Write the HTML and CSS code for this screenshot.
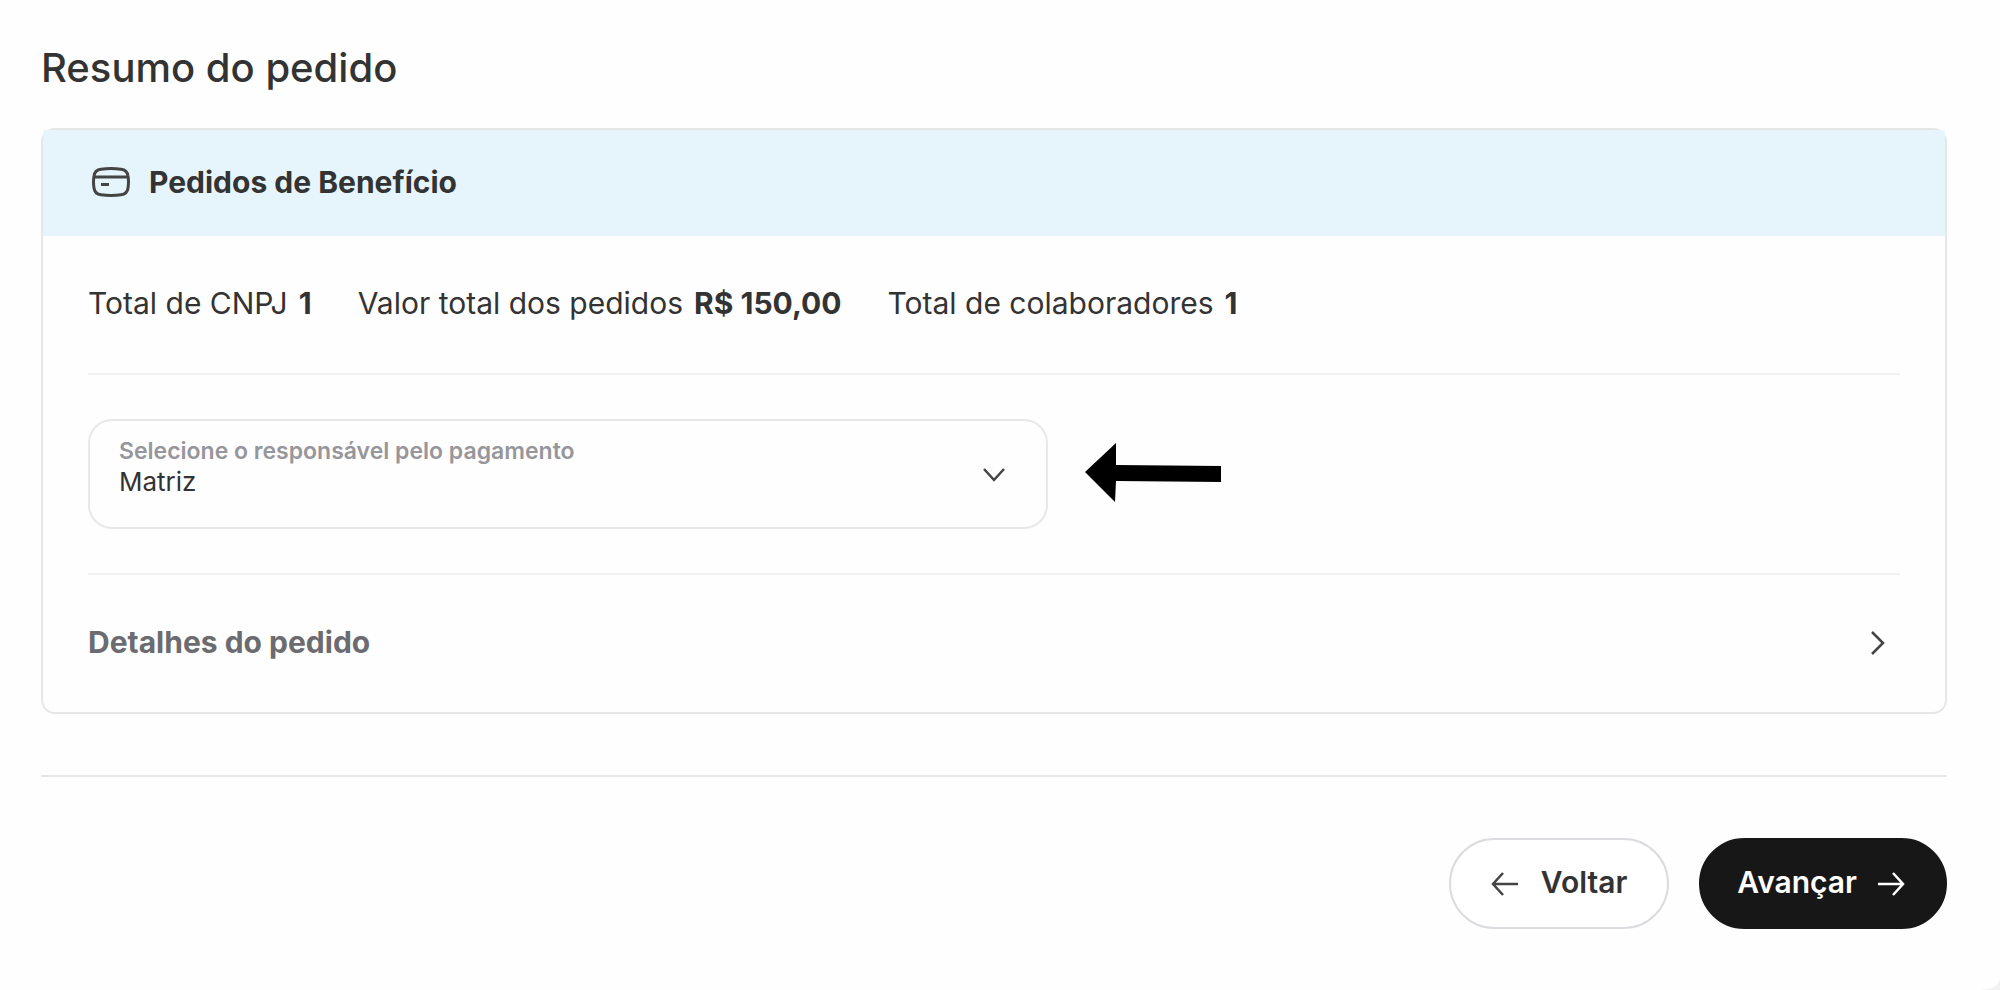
FILE: index.html
```html
<!DOCTYPE html>
<html lang="pt-BR">
<head>
<meta charset="UTF-8">
<meta name="viewport" content="width=device-width, initial-scale=1.0">
<title>Resumo do pedido</title>
<link rel="stylesheet" href="styles.css">
</head>
<body>
<main class="page">
    <h1>Resumo do pedido</h1>

    <section class="card">
        <div class="card-header">
            <svg class="card-icon" viewBox="0 0 38 30" width="38" height="30">
                <path d="M9 2.2Q19 .8 29 2.2Q35.300 3 36 9Q37 15 36 21Q35.300 27 29 27.800Q19 29.200 9 27.800Q2.700 27 2 21Q1 15 2 9Q2.700 3 9 2.200Z"/>
                <path d="M2 10H36M9 17.500H17"/>
            </svg>
            <h2>Pedidos de Benefício</h2>
        </div>

        <div class="card-body">
            <!-- Totais do pedido -->
            <div class="totals">
                <p><span>Total de CNPJ</span> <strong>1</strong></p>
                <p><span>Valor total dos pedidos</span> <strong>R$ 150,00</strong></p>
                <p><span>Total de colaboradores</span> <strong>1</strong></p>
            </div>

            <!-- Responsável pelo pagamento -->
            <div class="payment">
                <div class="field">
                    <label for="responsavel">Selecione o responsável pelo pagamento</label>
                    <select id="responsavel">
                        <option>Matriz</option>
                    </select>
                    <svg class="field-chevron" viewBox="0 0 24 24" width="24" height="24">
                        <path d="M2 6L12 17L22 6"/>
                    </svg>
                </div>
                <svg class="pointer" viewBox="0 0 137 62" width="137" height="62">
                    <path d="M0 29L31 0V22L136 23V39L31 38L30 59Z"/>
                </svg>
            </div>

            <button type="button" class="details">
                <span>Detalhes do pedido</span>
                <svg viewBox="0 0 44 44" width="44" height="44">
                    <path d="M16 12L27 23L16 34"/>
                </svg>
            </button>
        </div>
    </section>

    <div class="actions">
        <button type="button" class="btn btn-back">
            <svg viewBox="0 0 28 24" width="28" height="24">
                <path d="M12 1L2 12L12 23M2 12H27"/>
            </svg>
            <span>Voltar</span>
        </button>
        <button type="button" class="btn btn-next">
            <span>Avançar</span>
            <svg viewBox="0 0 28 24" width="28" height="24">
                <path d="M16 1L26 12L16 23M1 12H26"/>
            </svg>
        </button>
    </div>
</main>
</body>
</html>
```
FILE: styles.css
```css
* {
    box-sizing: border-box;
}

body {
    margin: 0;
    background-color: #f2f2f2;
    color: #333;
    font-family: Inter, Roboto, sans-serif;
    font-size: 30px;
    line-height: 40px;
}

.page {
    min-height: 100vh;
    padding: 44px 53px 61px 41px;
    background-color: #fefefe;
    border-bottom-right-radius: 20px 12px;
}

h1,
h2,
p {
    margin: 0;
}

h1 {
    margin-bottom: 36px;
    font-size: 40px;
    font-weight: 500;
    line-height: 48px;
}

h2 {
    font-size: 30px;
    font-weight: 700;
}

svg {
    flex: none;
    fill: none;
    stroke: #444;
    stroke-width: 2.5;
}

button,
select {
    margin: 0;
    color: inherit;
    font-family: inherit;
    cursor: pointer;
}

/* Card */
.card {
    border: 2px solid #e6e6e6;
    border-radius: 14px;
}

.card-header {
    display: flex;
    align-items: center;
    gap: 19px;
    padding: 32px 49px 34px;
    background-color: #e6f4fc;
    border-radius: 3px 3px 0 0;
}

.card-icon {
    stroke-width: 3;
}

.card-body {
    padding: 0 45px;
}

.totals {
    display: flex;
    flex-wrap: wrap;
    gap: 46px;
    padding: 47px 0 50px;
}

.totals p {
    display: flex;
    gap: 11px;
}

.totals strong {
    font-weight: 700;
}

.payment {
    display: flex;
    align-items: center;
    gap: 37px;
    padding: 44px 0;
    border-top: 2px solid #f2f2f2;
    border-bottom: 2px solid #f2f2f2;
}

.field {
    position: relative;
    width: 53%;
}

.field label {
    position: absolute;
    top: 20px;
    left: 31px;
    color: #96969b;
    font-size: 23px;
    font-weight: 600;
    line-height: 24px;
}

.field select {
    display: block;
    width: 100%;
    height: 110px;
    padding: 46px 80px 30px 29px;
    appearance: none;
    background-color: transparent;
    border: 2px solid #e8e8e8;
    border-radius: 24px;
    font-size: 26px;
    line-height: 30px;
}

.field-chevron {
    position: absolute;
    top: 44px;
    right: 42px;
    pointer-events: none;
}

.pointer {
    fill: #000;
    stroke: none;
}

.details {
    display: flex;
    align-items: center;
    justify-content: space-between;
    width: 100%;
    padding: 45px 0 48px;
    background: none;
    border: 0;
    color: #6b6b70;
    font-size: 30px;
    font-weight: 700;
    line-height: 40px;
}

/* Buttons */
.actions {
    display: flex;
    justify-content: flex-end;
    gap: 30px;
    margin-top: 61px;
    padding-top: 61px;
    border-top: 2px solid #e6e6e6;
}

.btn {
    display: flex;
    align-items: center;
    gap: 22px;
    height: 91px;
    padding: 0 40px;
    border: 2px solid #dcdce0;
    border-radius: 46px;
    font-size: 30px;
    font-weight: 600;
    line-height: 40px;
}

.btn span {
    padding-bottom: 3px;
}

.btn-back {
    background-color: #fff;
}

.btn-next {
    gap: 20px;
    padding-left: 36px;
    background-color: #171717;
    border-color: #171717;
    color: #fff;
}

.btn-next svg {
    stroke: #fff;
}
```
